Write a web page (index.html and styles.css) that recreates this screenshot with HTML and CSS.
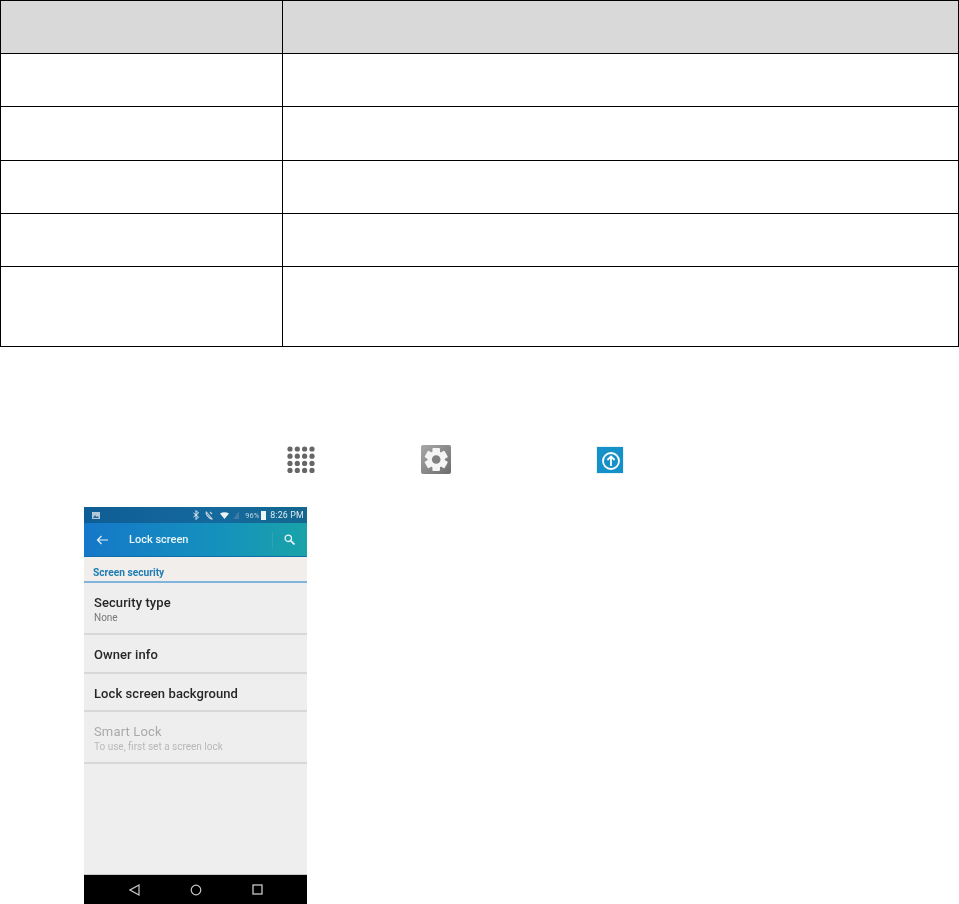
FILE: index.html
```html
<!DOCTYPE html>
<html lang="en">
<head>
<meta charset="utf-8">
<title>Lock screen</title>
<link rel="stylesheet" href="styles.css">
</head>
<body>
<table class="grid">
  <tr class="head r53"><td class="c1"></td><td></td></tr>
  <tr class="r53"><td class="c1"></td><td></td></tr>
  <tr class="r54"><td class="c1"></td><td></td></tr>
  <tr class="r53"><td class="c1"></td><td></td></tr>
  <tr class="r53"><td class="c1"></td><td></td></tr>
  <tr class="r80"><td class="c1"></td><td></td></tr>
</table>
<div class="icons">
  <svg class="apps" width="28" height="27" viewBox="0 0 28 27" fill="#666">
    <circle cx="3" cy="3" r="2.6"/><circle cx="10.3" cy="3" r="2.6"/><circle cx="17.6" cy="3" r="2.6"/><circle cx="25" cy="3" r="2.6"/>
    <circle cx="3" cy="10.2" r="2.6"/><circle cx="10.3" cy="10.2" r="2.6"/><circle cx="17.6" cy="10.2" r="2.6"/><circle cx="25" cy="10.2" r="2.6"/>
    <circle cx="3" cy="17.4" r="2.6"/><circle cx="10.3" cy="17.4" r="2.6"/><circle cx="17.6" cy="17.4" r="2.6"/><circle cx="25" cy="17.4" r="2.6"/>
    <circle cx="3" cy="24.4" r="2.6"/><circle cx="10.3" cy="24.4" r="2.6"/><circle cx="17.6" cy="24.4" r="2.6"/><circle cx="25" cy="24.4" r="2.6"/>
  </svg>
  <svg class="gear" width="30" height="29" viewBox="0 0 30 29">
    <defs><linearGradient id="gg" x1="0" y1="0" x2="1" y2="1"><stop offset="0" stop-color="#a8a8a8"/><stop offset="1" stop-color="#6c6c6c"/></linearGradient></defs>
    <rect width="30" height="29" rx="2" fill="url(#gg)"/>
    <g fill="#f4f4f4">
      <circle cx="15.2" cy="14.5" r="8.600"/>
      <rect x="11.400" y="3" width="7.600" height="23" rx="1"/>
      <rect x="11.400" y="3" width="7.600" height="23" rx="1" transform="rotate(60 15.2 14.5)"/>
      <rect x="11.400" y="3" width="7.600" height="23" rx="1" transform="rotate(-60 15.2 14.5)"/>
    </g>
    <circle cx="15.2" cy="14.500" r="4.300" fill="#808080"/>
  </svg>
  <svg class="update" width="28" height="28" viewBox="0 0 28 28">
    <rect width="28" height="28" fill="#e8f3f8"/>
    <rect x="1" y="1" width="26" height="26" fill="#1590c8"/>
    <circle cx="15" cy="15" r="8" fill="none" stroke="#fff" stroke-width="1.800"/>
    <path d="M15 20v-9.500M11.400 14l3.600-3.600 3.600 3.600" fill="none" stroke="#fff" stroke-width="1.800"/>
  </svg>
</div>
<div class="phone">
  <div class="status">
    <svg class="pic" width="8" height="7" viewBox="0 0 8 7"><rect width="8" height="7" fill="#b5c8d8"/><path d="M1 6l2-3 1.500 2 1-1 1.500 2z" fill="#2d6a9a"/></svg>
    <div class="status-right">
      <svg class="s-bt" width="6" height="10" viewBox="0 0 6 10"><path d="M.5 3l5 4-2.500 2.500v-9l2.500 2.500-5 4" fill="none" stroke="#dfe9f1" stroke-width="1"/></svg>
      <svg class="s-mute" width="8" height="9" viewBox="0 0 8 9"><path d="M1.500 1c-1 1 0 3 2 5s3.500 2.500 4 1.500M1 .5l6.500 8M5 1l2 2" fill="none" stroke="#c6d6e2" stroke-width="1.100"/></svg>
      <svg class="s-wifi" width="9" height="7" viewBox="0 0 9 7"><path d="M0 1.500Q4.500-1 9 1.500L4.500 7z" fill="#eef3f7"/></svg>
      <svg class="s-signal" width="6" height="8" viewBox="0 0 6 8"><path d="M6 0v8H0z" fill="#3f7aa8"/></svg>
      <span class="pct">96%</span>
      <span class="batt"></span>
      <span class="time">8:26 PM</span>
    </div>
  </div>
  <div class="appbar">
    <svg class="back" width="12" height="10" viewBox="0 0 12 10"><path d="M12 5H1.500M5.500 1L1.500 5l4 4" fill="none" stroke="#e6f2f8" stroke-width="1.200"/></svg>
    <span class="title">Lock screen</span>
    <span class="divider"></span>
    <svg class="search" width="11" height="11" viewBox="0 0 11 11"><circle cx="4.300" cy="4.300" r="3.200" fill="none" stroke="#eaf4f8" stroke-width="1.300"/><path d="M6.800 6.800L10.500 10.500" stroke="#eaf4f8" stroke-width="1.700"/></svg>
  </div>
  <div class="section">Screen security</div>
  <div class="item sec-type"><span class="main">Security type</span><span class="sub">None</span></div>
  <div class="item owner"><span class="main">Owner info</span></div>
  <div class="item bg"><span class="main">Lock screen background</span></div>
  <div class="item smart"><span class="main off">Smart Lock</span><span class="sub off">To use, first set a screen lock</span></div>
  <div class="spacer"></div>
  <div class="nav">
    <svg width="11" height="12" viewBox="0 0 11 12"><path d="M10 1v10L1 6z" fill="none" stroke="#c8c8c8" stroke-width="1.200"/></svg>
    <svg width="12" height="12" viewBox="0 0 12 12"><circle cx="6" cy="6" r="4.800" fill="none" stroke="#c8c8c8" stroke-width="1.200"/></svg>
    <svg width="11" height="11" viewBox="0 0 11 11"><rect x="1" y="1" width="9" height="9" fill="none" stroke="#c8c8c8" stroke-width="1.300"/></svg>
  </div>
</div>
</body>
</html>
```
FILE: styles.css
```css
html, body { margin: 0; padding: 0; background: #fff; }
body { width: 959px; height: 904px; overflow: hidden; font-family: Roboto, "Liberation Sans", sans-serif; }

.grid { width: 959px; border-collapse: collapse; table-layout: fixed; }
.grid td { border: 1px solid #000; padding: 0; }
.grid .c1 { width: 281px; }
.head td { background: #d9d9d9; }
.r53 { height: 53px; }
.r54 { height: 54px; }
.r80 { height: 80px; }

.icons { display: flex; align-items: center; height: 29px; margin-top: 98px; padding-left: 287px; }
.icons svg { filter: blur(.4px); }
.gear { margin-left: 106px; }
.update { margin-left: 145px; }

.phone { display: flex; flex-direction: column; width: 223px; height: 397px; margin: 33px 0 0 84px; background: #eeeeee; filter: blur(.4px); }

.status { display: flex; align-items: center; justify-content: space-between; height: 16px; padding: 0 3px 0 8px; background: linear-gradient(90deg, #0f5d96, #14699d 60%, #13678f); flex: none; }
.status-right { display: flex; align-items: center; }
.s-mute { margin-left: 6px; }
.s-wifi { margin-left: 7px; }
.s-signal { margin-left: 4px; }
.pct { margin-left: 6px; font-size: 7.500px; color: #c4d6e3; }
.batt { width: 5px; height: 9px; margin-left: 2px; background: #eef3f7; }
.time { margin-left: 4px; font-size: 8.800px; color: #e0eaf1; letter-spacing: .2px; }

.appbar { display: flex; align-items: center; height: 34px; background: linear-gradient(90deg, #1577c9, #1591bd 60%, #19a3a8); border-bottom: 1px solid #0f6fa8; box-sizing: border-box; flex: none; }
.back { margin-left: 12px; }
.title { margin-left: 21px; font-size: 11px; font-weight: 500; color: #e9f4f8; }
.divider { width: 1px; height: 16px; margin-left: auto; background: #2fa3b4; }
.search { margin: 0 12px 0 11px; }

.section { height: 26px; padding: 8px 0 0 9px; box-sizing: border-box; line-height: 16px; font-size: 10.200px; font-weight: 700; color: #1f7db3; background: #f1eeeb; border-bottom: 2px solid #7fb4dc; flex: none; }

.item { display: flex; flex-direction: column; justify-content: center; padding: 2px 0 0 10px; border-bottom: 2px solid #d8d8d8; box-sizing: border-box; flex: none; }
.sec-type { height: 52px; }
.owner { height: 39px; }
.bg { height: 38px; }
.smart { height: 52px; }
.main { font-size: 13px; font-weight: 500; line-height: 15px; color: #262626; letter-spacing: .08px; }
.sub { margin-top: 1px; font-size: 10px; line-height: 13px; color: #777; }
.main.off { font-weight: 400; color: #a9a9a9; letter-spacing: .15px; }
.sub.off { color: #b8b8b8; }

.spacer { flex: 1; }
.nav { display: flex; align-items: center; justify-content: space-between; height: 30px; padding: 0 44px 0 45px; box-sizing: border-box; background: #000; border-top: 1px solid #c9c9c9; flex: none; }
```
